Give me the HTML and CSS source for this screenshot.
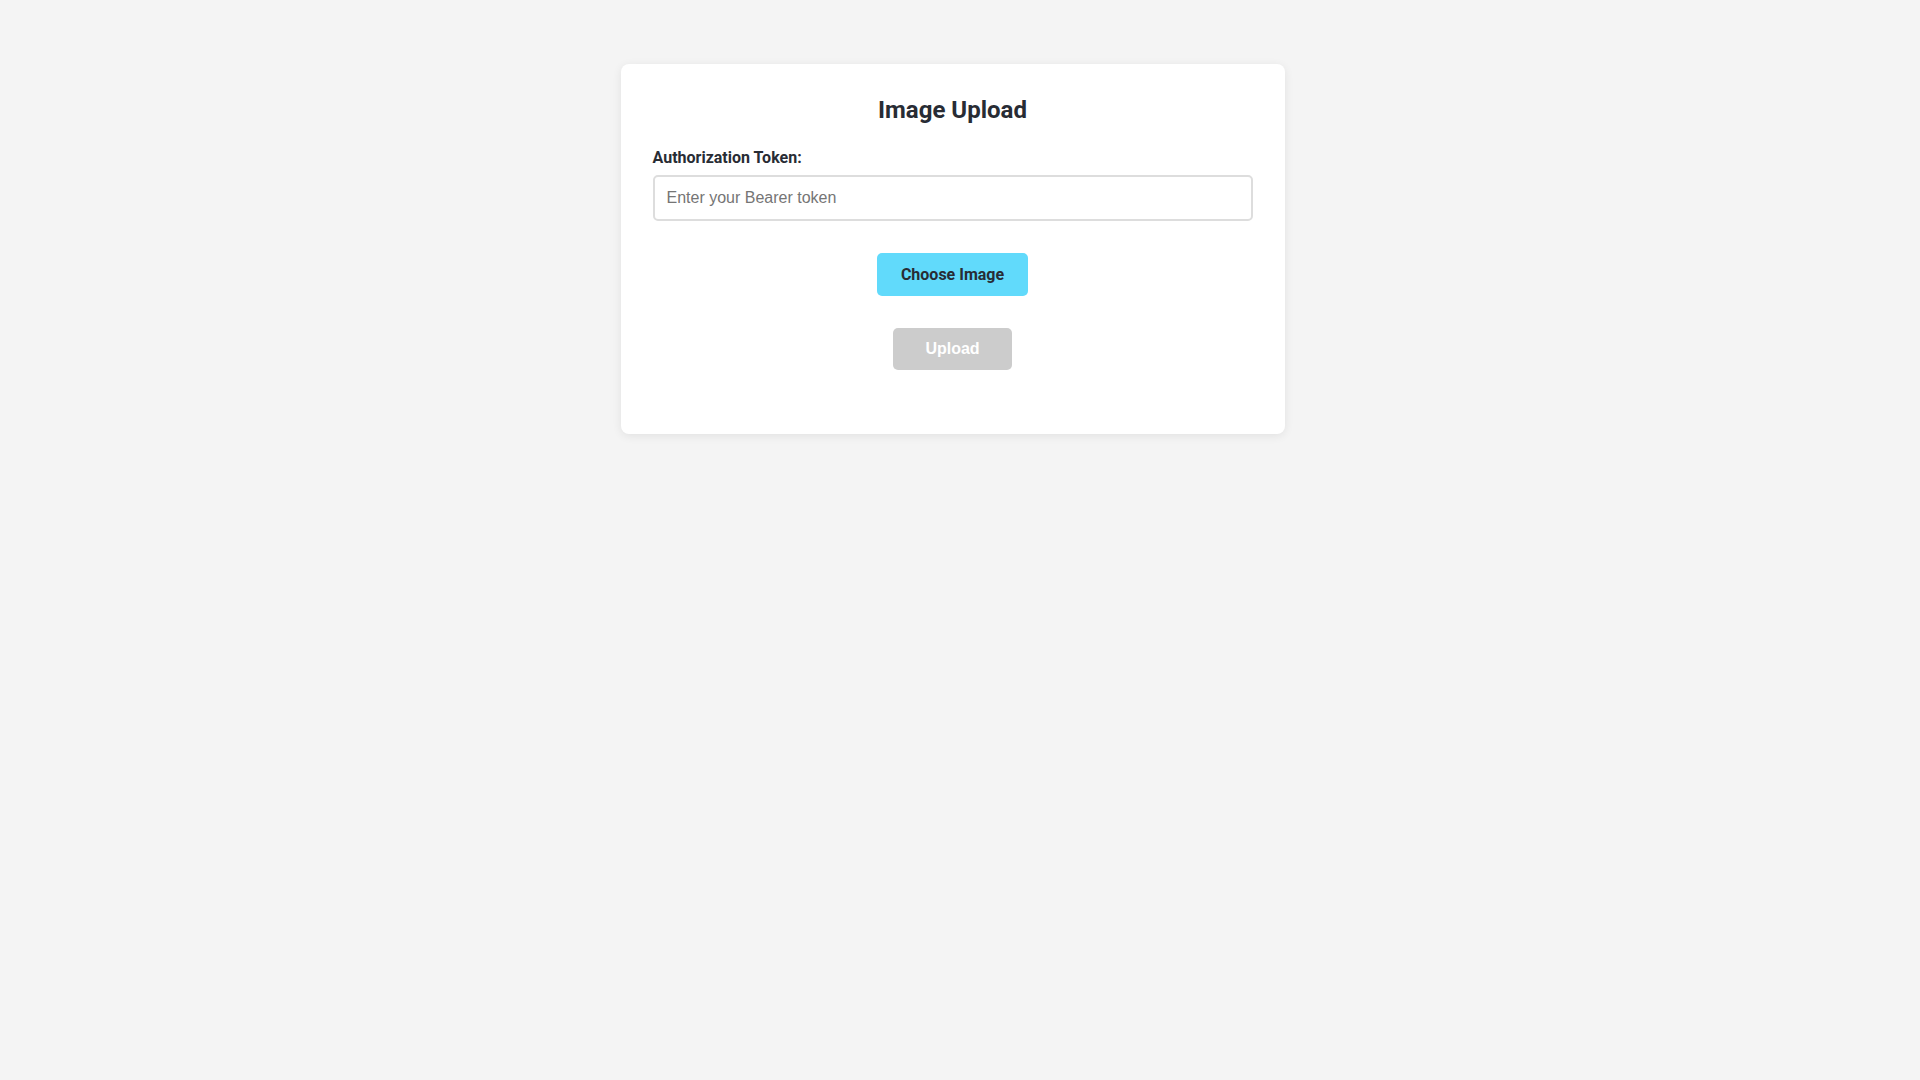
FILE: index.html
```html
<!doctype html>
<html>
<head>
<meta charset="utf-8">
<title>Image Upload</title>
<link rel="stylesheet" href="styles.css">
</head>
<body>
<div class="upload-box">
	<h2>Image Upload</h2>
	<div class="field">
		<label for="token">Authorization Token:</label>
		<input type="text" id="token" placeholder="Enter your Bearer token"/>
	</div>
	<div class="actions">
		<label class="btn-choose" for="file">Choose Image</label>
		<input type="file" id="file" accept="image/*" class="file-input"/>
		<button class="btn-upload" disabled>Upload</button>
	</div>
</div>
</body>
</html>
```
FILE: styles.css
```css
*{margin:0;padding:0;box-sizing:border-box;}
html{ overflow-y:scroll;}
::-webkit-scrollbar{ width:15px; background:#f1f1f1;}
::-webkit-scrollbar-thumb{ background:#c1c1c1; border:2px solid #f1f1f1; border-width:0 2px;}
body{ background:#f4f4f4; font-family:Roboto, "Liberation Sans", Arial, sans-serif; color:#282c34; padding:32px; margin-right:15px; min-height:100vh; box-sizing:content-box;}
.upload-box{ max-width:664px; margin:32px auto 0; background:#fff; border-radius:8px; padding:32px; box-shadow:0 2px 10px rgba(0,0,0,0.08);}
.upload-box h2{ font-size:24px; font-weight:700; text-align:center; margin-bottom:24px;}
.field{ display:flex; flex-direction:column; gap:8px;}
.field label{ font-size:16px; font-weight:700;}
.field input{ width:100%; padding:12px; border:2px solid #ddd; border-radius:5px; font-size:16px; font-family:"Liberation Sans", Arial, sans-serif; color:#282c34;}
.field input::placeholder{ color:#757575;}
.actions{ display:flex; flex-direction:column; align-items:center; gap:32px; padding:32px 0;}
.file-input{ display:none;}
.btn-choose{ background:#61dafb; color:#282c34; font-size:16px; font-weight:700; padding:12px 24px; border-radius:5px; cursor:pointer;}
.btn-upload{ background:#ccc; color:#fff; border:none; font-size:16px; font-weight:700; font-family:"Liberation Sans", Arial, sans-serif; padding:12px 32px; border-radius:5px;}
```
